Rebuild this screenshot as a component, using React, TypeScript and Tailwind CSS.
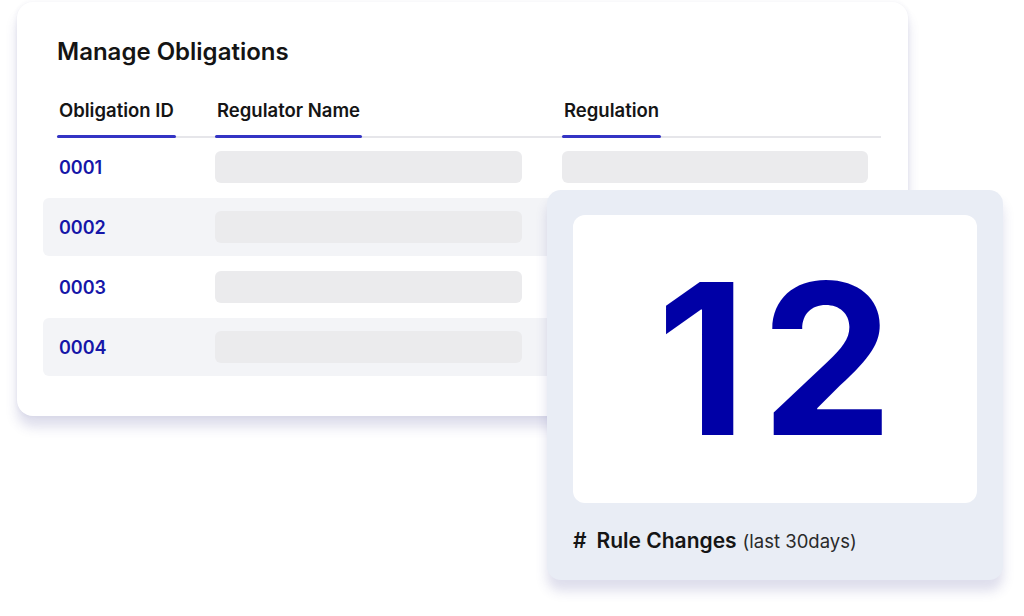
import React from "react"

const rows = [
  { id: "0001", shaded: false },
  { id: "0002", shaded: true },
  { id: "0003", shaded: false },
  { id: "0004", shaded: true },
]

function HeaderCell({ label, className }: { label: string; className: string }) {
  return (
    <div className={className}>
      <div className="inline-flex flex-col">
        <span className="text-[18.5px] font-semibold leading-[22px] text-[#151515] px-[2px]">{label}</span>
        <div className="mt-[14px] h-[3px] bg-[#3434c4] rounded-full"></div>
      </div>
    </div>
  )
}

export default function App() {
  return (
    <div
      className="relative w-[1024px] h-[616px] bg-white overflow-hidden"
      style={{ fontFamily: "Inter, 'Noto Sans', sans-serif" }}
    >
      {/* obligations table card */}
      <div className="ml-[17px] mt-[2px] w-[891px] h-[414px] bg-white rounded-[16px] shadow-[0_11px_12px_rgba(60,60,140,0.17),0_0_5px_rgba(50,50,130,0.07)] pt-[36px]">
        <h2 className="ml-[40px] text-[24px] font-semibold leading-[28px] text-[#141414]">Manage Obligations</h2>

        <div className="ml-[40px] mt-[33px] w-[824px] relative">
          <div className="flex items-end">
            <HeaderCell label="Obligation ID" className="w-[158px]" />
            <HeaderCell label="Regulator Name" className="w-[347px]" />
            <HeaderCell label="Regulation" className="flex-1" />
          </div>
          <div className="h-[2px] bg-[#e6e6ea] -mt-[2px]"></div>
        </div>

        <div className="ml-[26px] w-[838px] flex flex-col gap-[2px]">
          {rows.map((r) => (
            <div
              key={r.id}
              className={`h-[58px] flex items-center pl-[16px] rounded-[6px] ${r.shaded ? "bg-[#f3f4f7]" : ""}`}
            >
              <div className="w-[156px] text-[18px] font-semibold text-[#1616a8]">{r.id}</div>
              <div className="w-[307px] h-[32px] rounded-[6px] bg-[#ebebed]"></div>
              <div className="w-[40px]"></div>
              <div className="w-[306px] h-[32px] rounded-[6px] bg-[#ebebed]"></div>
            </div>
          ))}
        </div>
      </div>

      {/* rule changes overlay card */}
      <div className="absolute left-[547px] top-[190px] w-[456px] h-[390px] rounded-[14px] bg-[#e9edf5] shadow-[0_11px_12px_rgba(60,60,140,0.17)] p-[25px_26px]">
        <div className="h-[288px] rounded-[12px] bg-white flex items-center justify-center">
          <span className="pl-[14px] text-[210px] font-bold leading-none tracking-[14px] text-[#0000a6]">12</span>
        </div>
        <div className="mt-[22px] flex items-baseline text-[#151515]">
          <span className="text-[21px] font-semibold mr-[10px]">#</span>
          <span className="text-[21px] font-semibold">Rule Changes</span>
          <span className="ml-[6px] text-[18.5px] text-[#2a2a2a]">(last 30days)</span>
        </div>
      </div>
    </div>
  )
}
